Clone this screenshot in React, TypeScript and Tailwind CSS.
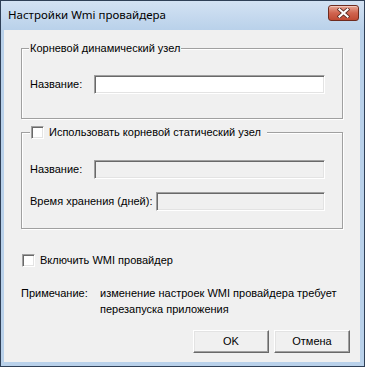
import React from 'react';

function Sunken({ w, disabled }: { w: string; disabled?: boolean }) {
    return (
        <div
            className={`${w} h-[19px] border border-t-[#a0a0a0] border-l-[#a0a0a0] border-r-white border-b-white shadow-[inset_1px_1px_0_#696969,inset_-1px_-1px_0_#e3e3e3] ${disabled ? 'bg-[#f0f0f0]' : 'bg-white'}`}
        />
    );
}

function CheckBox() {
    return (
        <div className="w-[13px] h-[13px] shrink-0 bg-white border border-t-[#a0a0a0] border-l-[#a0a0a0] border-r-white border-b-white shadow-[inset_1px_1px_0_#696969,inset_-1px_-1px_0_#e3e3e3]" />
    );
}

function Button({ children }: { children: React.ReactNode }) {
    return (
        <div className="w-[76px] h-[23px] flex items-center justify-center bg-[#f0f0f0] border border-t-white border-l-white border-r-[#696969] border-b-[#696969] shadow-[inset_-1px_-1px_0_#a0a0a0,inset_1px_1px_0_#e3e3e3]">
            {children}
        </div>
    );
}

export default function App() {
    return (
        <div className="w-[365px] h-[367px] flex flex-col bg-[#b9d1ea] border border-[#2f4057] font-['Liberation_Sans',Arial,sans-serif] text-[11px] text-black">
            {/* title bar */}
            <div className="h-[29px] flex items-start justify-between pl-[7px] pr-[5px] pt-[4px] bg-gradient-to-b from-[#d3e2f3] to-[#b9d1ea]">
                <span className="font-['Noto_Sans',sans-serif] text-[11.5px] leading-[18px] mt-[1px]">Настройки Wmi провайдера</span>
                <div className="w-[31px] h-[16px] rounded-[3px] border border-[#6e2b1f] bg-gradient-to-b from-[#e6a594] via-[#d0644f] to-[#c04a33] flex items-center justify-center shadow-[inset_0_1px_0_#f3c7bb]">
                    <svg width="13" height="10" viewBox="0 0 13 10">
                        <path d="M2.5 1.5 L10.5 8.5 M10.5 1.5 L2.5 8.5" stroke="#5a2a22" strokeWidth="3.8" strokeLinecap="square" />
                        <path d="M2.5 1.5 L10.5 8.5 M10.5 1.5 L2.5 8.5" stroke="#ffffff" strokeWidth="2.2" strokeLinecap="square" />
                    </svg>
                </div>
            </div>

            {/* client area */}
            <div className="flex-1 ml-[3px] mr-[4px] mb-[4px] bg-[#f0f0f0] flex flex-col pl-[17px] pt-[18px]">
                <div className="relative w-[322px] h-[71px] border border-[#a0a0a0] shadow-[inset_1px_1px_0_#fff,1px_1px_0_#fff] pt-[26px] pl-[8px]">
                    <span className="absolute left-[7px] top-[-8px] px-[1px] bg-[#f0f0f0] leading-[14px]">Корневой динамический узел</span>
                    <div className="flex items-center">
                        <span className="w-[64px]">Название:</span>
                        <Sunken w="w-[231px]" />
                    </div>
                </div>

                <div className="relative w-[322px] h-[97px] mt-[13px] border border-[#a0a0a0] shadow-[inset_1px_1px_0_#fff,1px_1px_0_#fff] pt-[27px] pl-[8px] flex flex-col gap-[13px]">
                    <div className="absolute left-[8px] top-[-8px] pl-[1px] pr-[6px] bg-[#f0f0f0] flex items-center gap-[5px] leading-[14px]">
                        <CheckBox />
                        <span>Использовать корневой статический узел</span>
                    </div>
                    <div className="flex items-center">
                        <span className="w-[64px]">Название:</span>
                        <Sunken w="w-[231px]" disabled />
                    </div>
                    <div className="flex items-center">
                        <span className="w-[126px]">Время хранения (дней):</span>
                        <Sunken w="w-[169px]" disabled />
                    </div>
                </div>

                <div className="flex items-center gap-[5px] mt-[25px] ml-[1px] leading-[13px]">
                    <CheckBox />
                    <span>Включить WMI провайдер</span>
                </div>

                <div className="flex mt-[18px] leading-[16px]">
                    <span className="w-[79px] shrink-0">Примечание:</span>
                    <span className="w-[250px]">изменение настроек WMI провайдера требует перезапуска приложения</span>
                </div>

                <div className="flex justify-end gap-[5px] pr-[10px] mt-[13px]">
                    <Button>OK</Button>
                    <Button>Отмена</Button>
                </div>
            </div>
        </div>
    );
}
